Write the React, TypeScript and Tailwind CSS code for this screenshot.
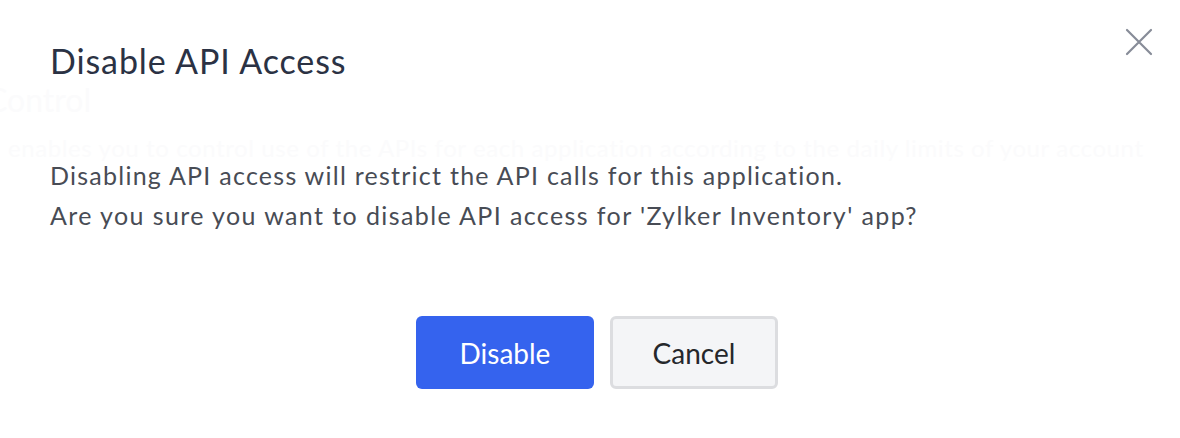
import React from "react";

export default function App() {
  return (
    <div className="relative w-[1180px] h-[438px] bg-white overflow-hidden" style={{ fontFamily: "Lato, 'Noto Sans', sans-serif" }}>
      {/* faint page behind overlay */}
      <div className="absolute inset-0 pointer-events-none select-none text-[#fbfbfc]">
        <div className="absolute left-[-14px] top-[80px] text-[32px] leading-[40px] whitespace-nowrap">Control</div>
        <div className="absolute left-[8px] top-[132px] text-[24px] leading-[32px] tracking-[0.6px] whitespace-nowrap">
          enables you to control use of the APIs for each application according to the daily limits of your account
        </div>
      </div>

      <div className="relative flex flex-col">
        <div className="flex items-start justify-between pl-[50px] pr-[26px] pt-[39px]">
          <h1 className="text-[34px] leading-[44px] tracking-[0.9px] text-[#2b3244] font-normal">Disable API Access</h1>
          <button className="mt-[-12px] w-[30px] h-[30px] flex items-center justify-center text-[#878c98]">
            <svg width="28" height="28" viewBox="0 0 28 28" fill="none" stroke="currentColor" strokeWidth="2.2" strokeLinecap="round">
              <path d="M2 2 L26 26 M26 2 L2 26" />
            </svg>
          </button>
        </div>
        <div className="pl-[50px] mt-[72px] text-[25px] leading-[40px] text-[#484c55]">
          <p className="tracking-[1.25px]">Disabling API access will restrict the API calls for this application.</p>
          <p className="tracking-[1.4px]">Are you sure you want to disable API access for 'Zylker Inventory' app?</p>
        </div>
        <div className="flex justify-center gap-[16px] mt-[81px] pl-[14px]">
          <button className="w-[178px] h-[73px] rounded-[6px] bg-[#3563ee] text-white text-[28px]">Disable</button>
          <button className="w-[168px] h-[73px] rounded-[6px] bg-[#f4f5f7] border-[3px] border-[#dcdde0] text-[#25272b] text-[28px]">Cancel</button>
        </div>
      </div>
    </div>
  );
}
